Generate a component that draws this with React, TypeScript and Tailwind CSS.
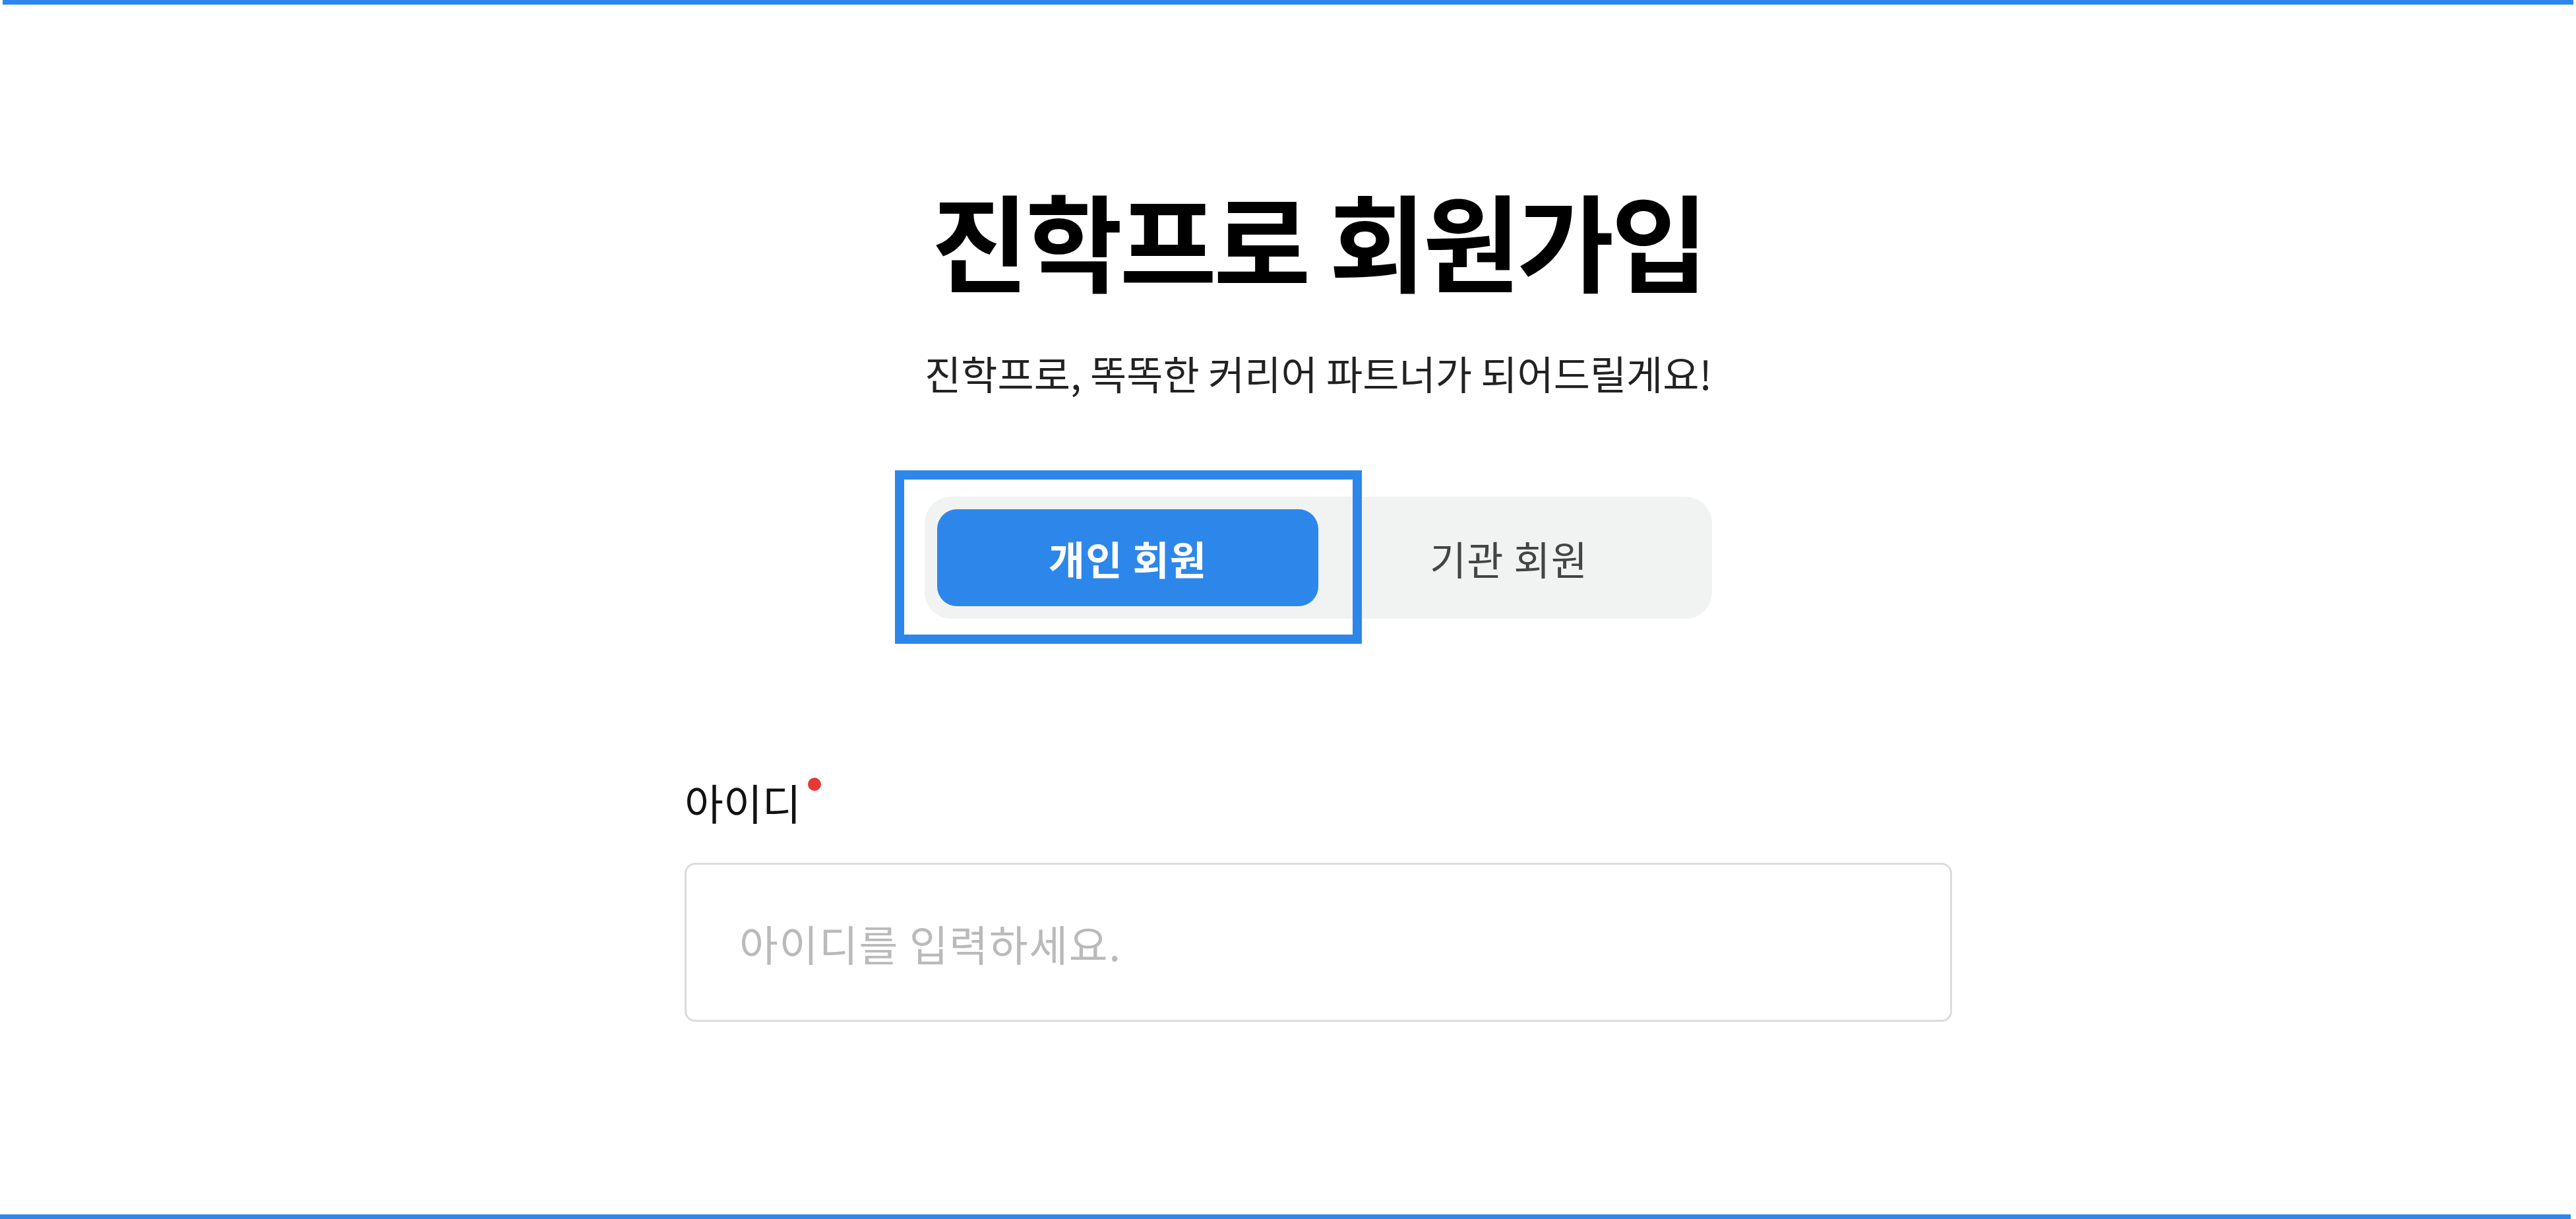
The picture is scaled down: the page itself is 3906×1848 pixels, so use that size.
import React, { useState } from 'react'

const font = { fontFamily: '"Noto Sans CJK KR", "Noto Sans", sans-serif' }

export default function App() {
    const [memberType, setMemberType] = useState<'personal' | 'org'>('personal')

    return (
        <div className="flex flex-col h-[1848px] bg-white overflow-hidden" style={font}>
            {/* 상단 라인 */}
            <div className="h-[7px] mx-[4px] bg-[#2d87ea]" />

            {/* 본문 */}
            <div className="flex-1">
                <div className="w-[1922px] ml-[1038px] flex flex-col items-center">
                    <h1 className="mt-[274px] text-[160px] leading-none font-bold tracking-[-0.028em] text-black">
                        진학프로 회원가입
                    </h1>
                    <p className="mt-[94px] text-[60px] leading-none tracking-normal text-[#222]">
                        진학프로, 똑똑한 커리어 파트너가 되어드릴게요!
                    </p>

                    {/* 회원 유형 탭 */}
                    <div className="relative mt-[158px] w-[1194px] grid grid-cols-2 p-[19px] bg-[#f1f2f2] rounded-[40px]">
                        <button
                            onClick={() => setMemberType('personal')}
                            className={`h-[147px] rounded-[30px] text-[60px] tracking-[0.02em] ${memberType === 'personal' ? 'bg-[#2d87ea] text-white font-bold' : 'text-[#444]'}`}
                        >
                            개인 회원
                        </button>
                        <button
                            onClick={() => setMemberType('org')}
                            className={`h-[147px] rounded-[30px] text-[60px] tracking-[0.02em] ${memberType === 'org' ? 'bg-[#2d87ea] text-white font-bold' : 'text-[#444]'}`}
                        >
                            기관 회원
                        </button>
                        {/* 강조 테두리 */}
                        <div className="absolute -left-[45px] -top-[40px] w-[708px] h-[263px] border-[14px] border-[#2d87ea] pointer-events-none" />
                    </div>

                    {/* 아이디 */}
                    <div className="self-stretch mt-[245px]">
                        <div className="flex items-start">
                            <span className="text-[64px] leading-none tracking-normal text-[#111]">아이디</span>
                            <span className="ml-[10px] -mt-[4px] w-[20px] h-[20px] rounded-full bg-[#e53935]" />
                        </div>
                        <input
                            className="mt-[61px] w-full h-[241px] border-[3px] border-[#dcdcdc] rounded-[16px] pl-[80px] text-[64px] tracking-[0.025em] outline-none placeholder:text-[#bababa]"
                            style={font}
                            placeholder="아이디를 입력하세요."
                        />
                    </div>
                </div>
            </div>

            {/* 하단 라인 */}
            <div className="h-[7px] mr-[8px] bg-[#2d87ea]" />
        </div>
    )
}
